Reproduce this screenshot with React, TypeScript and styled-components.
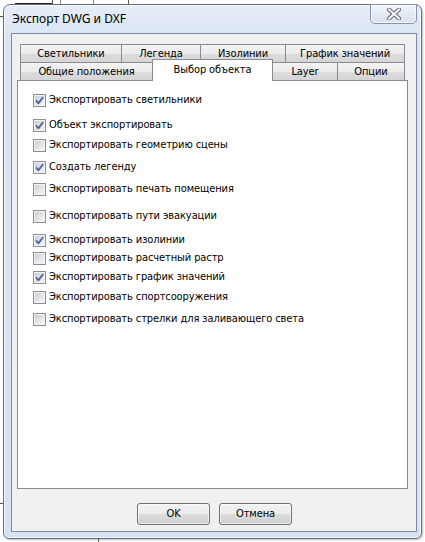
import React from "react";
import styled, { createGlobalStyle } from "styled-components";

const Global = createGlobalStyle`
  html, body { margin: 0; padding: 0; background: #fff; }
  body {
    font-family: "DejaVu Sans Condensed", "DejaVu Sans", Tahoma, sans-serif;
    font-size: 11px;
    letter-spacing: -0.1px;
    color: #000;
  }
`;

const Desktop = styled.div`
  position: relative;
  width: 425px;
  height: 542px;
  overflow: hidden;
  background: #fff;
  padding: 4px 0 0 3px;
  box-sizing: border-box;
`;

const Backdrop = styled.svg`
  position: absolute;
  left: 0;
  top: 0;
  z-index: 0;
`;

const Window = styled.div`
  position: relative;
  z-index: 1;
  width: 419px;
  height: 535px;
  box-sizing: border-box;
  border: 1px solid #5f6e82;
  border-radius: 7px 7px 6px 6px;
  background: linear-gradient(to bottom, #e6eef8 0px, #dae5f3 30px, #d6e2f2 100%);
  box-shadow: inset 0 0 0 1px rgba(255, 255, 255, 0.75), 1px 1px 2px rgba(0, 0, 0, 0.25);
  padding: 0 4px 6px 7px;
  display: flex;
  flex-direction: column;
`;

const TitleBar = styled.div`
  height: 28px;
  display: flex;
  justify-content: space-between;
  align-items: flex-start;
  flex: none;
`;

const Title = styled.div`
  margin-top: 6px;
  padding-left: 1px;
  font-family: "Noto Sans", "Open Sans", sans-serif;
  font-size: 12px;
  letter-spacing: 0;
  line-height: 16px;
  color: #000;
`;

const CloseButton = styled.div`
  width: 47px;
  height: 20px;
  margin-top: -1px;
  box-sizing: border-box;
  border: 1px solid #8593a8;
  border-radius: 0 0 5px 5px;
  background: linear-gradient(to bottom, #f3f6fb 0%, #e3eaf4 50%, #d8e2ef 100%);
  box-shadow: inset 0 0 0 1px rgba(255, 255, 255, 0.7);
  display: flex;
  align-items: center;
  justify-content: center;
`;

const Client = styled.div`
  height: 499px;
  box-sizing: border-box;
  border: 1px solid #7f8b9b;
  background: #f0f0f0;
  padding: 10px 8px 0 5px;
  display: flex;
  flex-direction: column;
`;

const TabControl = styled.div`
  width: 391px;
  display: flex;
  flex-direction: column;
`;

const TabRows = styled.div`
  margin-left: 3px;
  display: flex;
  flex-direction: column;
`;

const TabRow = styled.div`
  display: flex;
  align-items: flex-end;
  height: 18px;
  position: relative;
`;

const Tab = styled.div<{ $w: number; $active?: boolean }>`
  width: ${(p) => p.$w}px;
  height: ${(p) => (p.$active ? 22 : 18)}px;
  box-sizing: border-box;
  border: 1px solid #898c95;
  border-bottom: none;
  padding-top: ${(p) => (p.$active ? 2 : 1)}px;
  line-height: 16px;
  text-align: center;
  white-space: nowrap;
  background: ${(p) =>
    p.$active
      ? "#fff"
      : "linear-gradient(to bottom, #f3f3f3 0%, #ebebeb 50%, #dddddd 51%, #d5d5d5 100%)"};
  margin-bottom: ${(p) => (p.$active ? -1 : 0)}px;
  position: relative;
  z-index: ${(p) => (p.$active ? 3 : 1)};
  & + & {
    margin-left: -1px;
  }
`;

const Panel = styled.div`
  height: 409px;
  box-sizing: border-box;
  border: 1px solid #898c95;
  background: #fff;
  padding: 11px 0 0 15px;
  display: flex;
  flex-direction: column;
`;

const Row = styled.label<{ $gap: number }>`
  display: flex;
  align-items: center;
  height: 16px;
  margin-top: ${(p) => p.$gap}px;
  white-space: nowrap;
`;

const Box = styled.span`
  width: 13px;
  height: 13px;
  box-sizing: border-box;
  border: 1px solid #8e8f8f;
  background: linear-gradient(135deg, #c4c8ce 0%, #e4e6e9 55%, #f8f8f8 100%);
  box-shadow: inset 0 0 0 1px #f2f2f2;
  display: flex;
  align-items: center;
  justify-content: center;
  flex: none;
`;

const Label = styled.span`
  margin-left: 3px;
  line-height: 16px;
`;

const ButtonRow = styled.div`
  margin-top: 14px;
  padding-left: 4px;
  display: flex;
  justify-content: center;
  gap: 9px;
`;

const Button = styled.div`
  width: 73px;
  height: 22px;
  box-sizing: border-box;
  border: 1px solid #707070;
  border-radius: 3px;
  background: linear-gradient(to bottom, #f2f2f2 0%, #ebebeb 50%, #dddddd 51%, #cfcfcf 100%);
  box-shadow: inset 0 0 0 1px rgba(255, 255, 255, 0.6);
  display: flex;
  align-items: center;
  justify-content: center;
  line-height: 16px;
`;

const Check = () => (
  <svg width="9" height="9" viewBox="0 0 9 9">
    <path d="M1.2 4.6 L3.4 7.2 L8 1.4" fill="none" stroke="#b3c1de" strokeWidth="2.6" strokeLinecap="round" strokeLinejoin="round" />
    <path d="M1.2 4.6 L3.4 7.2 L8 1.4" fill="none" stroke="#4a5d8e" strokeWidth="1.5" strokeLinejoin="round" />
  </svg>
);

const CloseIcon = () => (
  <svg width="14" height="12" viewBox="0 0 14 12">
    <path d="M2 1.5 L12 10.5 M12 1.5 L2 10.5" stroke="#5d6673" strokeWidth="4" strokeLinecap="square" />
    <path d="M2 1.5 L12 10.5 M12 1.5 L2 10.5" stroke="#f6f8fb" strokeWidth="2" strokeLinecap="square" />
  </svg>
);

const row1 = [
  { t: "Светильники", w: 102 },
  { t: "Легенда", w: 80 },
  { t: "Изолинии", w: 86 },
  { t: "График значений", w: 120 },
];

const row2 = [
  { t: "Общие положения", w: 133 },
  { t: "Выбор объекта", w: 121, active: true },
  { t: "Layer", w: 66 },
  { t: "Опции", w: 68 },
];

const items = [
  { t: "Экспортировать светильники", c: true, g: 0 },
  { t: "Объект экспортировать", c: true, g: 9 },
  { t: "Экспортировать геометрию сцены", c: false, g: 4 },
  { t: "Создать легенду", c: true, g: 6 },
  { t: "Экспортировать печать помещения", c: false, g: 6 },
  { t: "Экспортировать пути эвакуации", c: false, g: 11 },
  { t: "Экспортировать изолинии", c: true, g: 8 },
  { t: "Экспортировать расчетный растр", c: false, g: 2 },
  { t: "Экспортировать график значений", c: true, g: 3 },
  { t: "Экспортировать спортсооружения", c: false, g: 4 },
  { t: "Экспортировать стрелки для заливающего света", c: false, g: 6 },
];

export default function App() {
  return (
    <>
      <Global />
      <Desktop>
        <Backdrop width="425" height="542">
          <line x1="15" y1="3.5" x2="52" y2="3.5" stroke="#222" strokeWidth="1" />
          <line x1="52.5" y1="0" x2="52.5" y2="4" stroke="#555" />
          <line x1="60.5" y1="0" x2="60.5" y2="4" stroke="#888" />
          <line x1="93.5" y1="0" x2="93.5" y2="4" stroke="#888" />
          <line x1="128.5" y1="0" x2="128.5" y2="4" stroke="#6b5a3a" />
          <line x1="0" y1="16.5" x2="3" y2="16.5" stroke="#555" />
          <line x1="0" y1="503.5" x2="3" y2="503.5" stroke="#555" />
          <line x1="98.5" y1="538" x2="98.5" y2="542" stroke="#6b5a3a" />
        </Backdrop>
        <Window>
          <TitleBar>
            <Title>Экспорт DWG и DXF</Title>
            <CloseButton>
              <CloseIcon />
            </CloseButton>
          </TitleBar>
          <Client>
            <TabControl>
              <TabRows>
                <TabRow>
                  {row1.map((r) => (
                    <Tab key={r.t} $w={r.w}>
                      {r.t}
                    </Tab>
                  ))}
                </TabRow>
                <TabRow>
                  {row2.map((r) => (
                    <Tab key={r.t} $w={r.w} $active={r.active}>
                      {r.t}
                    </Tab>
                  ))}
                </TabRow>
              </TabRows>
              <Panel>
                {items.map((it) => (
                  <Row key={it.t} $gap={it.g}>
                    <Box>{it.c && <Check />}</Box>
                    <Label>{it.t}</Label>
                  </Row>
                ))}
              </Panel>
            </TabControl>
            <ButtonRow>
              <Button>OK</Button>
              <Button>Отмена</Button>
            </ButtonRow>
          </Client>
        </Window>
      </Desktop>
    </>
  );
}
